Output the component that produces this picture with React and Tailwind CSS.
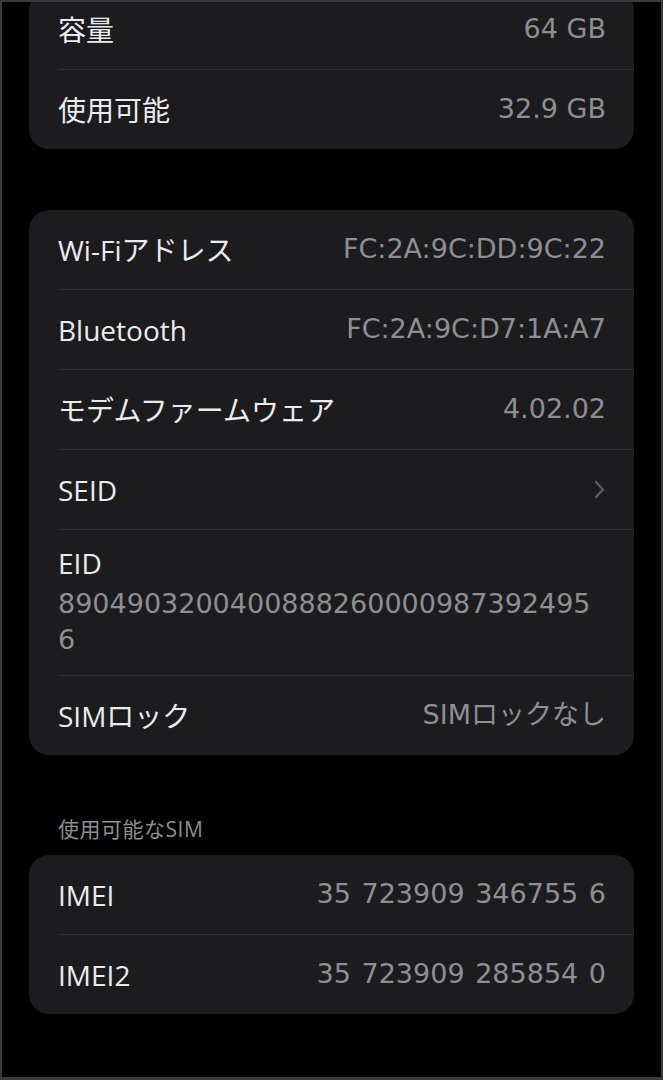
import React from 'react'

const font = { fontFamily: '"Open Sans", "Noto Sans CJK JP", sans-serif' }
const valueFont = { fontFamily: '"DejaVu Sans", "Noto Sans CJK JP", sans-serif' }

function Row({ label, value, chevron, wide }) {
  return (
    <div className="h-[79px] flex items-center justify-between pl-[29px] pr-[28px]">
      <span className="text-[28px] text-[#ebebed]">{label}</span>
      {chevron ? (
        <svg width="11" height="19" viewBox="0 0 11 19" fill="none" className="mr-[1px]">
          <path d="M2 2l7 7.5L2 17" stroke="#5c5c61" strokeWidth="2.4" strokeLinecap="round" strokeLinejoin="round" />
        </svg>
      ) : (
        <span
          className={wide ? 'text-[27px] text-[#8e8e93] [word-spacing:2px]' : 'text-[27px] text-[#8e8e93]'}
          style={valueFont}
        >
          {value}
        </span>
      )}
    </div>
  )
}

function Sep() {
  return <div className="ml-[29px] h-px bg-[#2e2e31]" />
}

export default function App() {
  return (
    <div className="w-[663px] h-[1080px] bg-black overflow-hidden border-t-2 border-l-2 border-r-2 border-b-[3px] border-[#3a3a3c]" style={font}>
      <div className="-mt-[12px] px-[27px]">
        {/* storage */}
        <div className="bg-[#1c1c1e] rounded-[20px]">
          <Row label="容量" value="64 GB" />
          <Sep />
          <Row label="使用可能" value="32.9 GB" />
        </div>

        {/* addresses */}
        <div className="mt-[61px] bg-[#1c1c1e] rounded-[20px]">
          <Row label="Wi-Fiアドレス" value="FC:2A:9C:DD:9C:22" />
          <Sep />
          <Row label="Bluetooth" value="FC:2A:9C:D7:1A:A7" />
          <Sep />
          <Row label="モデムファームウェア" value="4.02.02" />
          <Sep />
          <Row label="SEID" chevron />
          <Sep />
          <div className="pl-[29px] pr-[28px] pt-[14px] pb-[17px]">
            <div className="text-[28px] leading-[38px] text-[#ebebed]">EID</div>
            <div className="mt-1 text-[27px] leading-[36px] text-[#8e8e93]" style={valueFont}>
              <div>8904903200400888260000987392495</div>
              <div>6</div>
            </div>
          </div>
          <Sep />
          <Row label="SIMロック" value="SIMロックなし" />
        </div>

        {/* SIM */}
        <div className="pt-[61px] pl-[29px] text-[21px] leading-[26px] tracking-[0.5px] text-[#8e8e93]">使用可能なSIM</div>
        <div className="mt-[13px] bg-[#1c1c1e] rounded-[20px]">
          <Row label="IMEI" value="35 723909 346755 6" wide />
          <Sep />
          <Row label="IMEI2" value="35 723909 285854 0" wide />
        </div>
      </div>
    </div>
  )
}
